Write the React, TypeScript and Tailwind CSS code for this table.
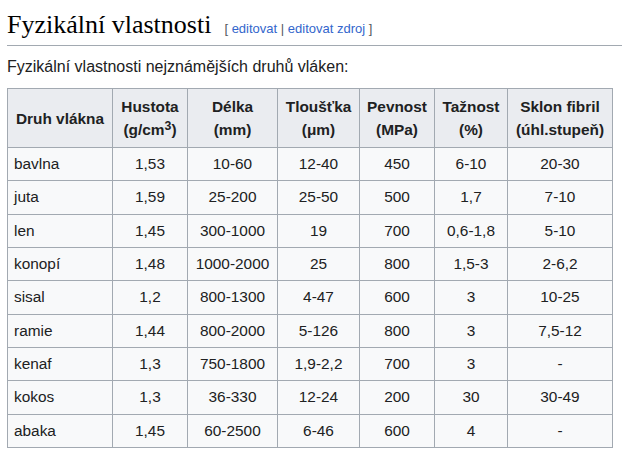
import React from "react";

const rows: string[][] = [
  ["bavlna", "1,53", "10-60", "12-40", "450", "6-10", "20-30"],
  ["juta", "1,59", "25-200", "25-50", "500", "1,7", "7-10"],
  ["len", "1,45", "300-1000", "19", "700", "0,6-1,8", "5-10"],
  ["konopí", "1,48", "1000-2000", "25", "800", "1,5-3", "2-6,2"],
  ["sisal", "1,2", "800-1300", "4-47", "600", "3", "10-25"],
  ["ramie", "1,44", "800-2000", "5-126", "800", "3", "7,5-12"],
  ["kenaf", "1,3", "750-1800", "1,9-2,2", "700", "3", "-"],
  ["kokos", "1,3", "36-330", "12-24", "200", "30", "30-49"],
  ["abaka", "1,45", "60-2500", "6-46", "600", "4", "-"],
];

const th =
  "border border-[#a2a9b1] bg-[#eaecf0] px-[6px] h-[59px] leading-[23px] font-bold text-center align-middle";
const tdFirst =
  "border border-[#a2a9b1] px-[6px] h-[33.33px] leading-[22px] text-left align-middle";
const td =
  "border border-[#a2a9b1] px-[6px] h-[33.33px] leading-[22px] text-center align-middle";

export default function App() {
  return (
    <div
      className="bg-white text-[#202122] px-[7px] pt-[8px] w-[622px] h-[456px] overflow-hidden"
      style={{ fontFamily: '"Liberation Sans", Arial, sans-serif' }}
    >
      <div className="border-b border-[#a2a9b1] pb-[3px] -mr-[7px]">
        <span
          className="text-[26px] leading-[34px] text-black"
          style={{ fontFamily: '"Liberation Serif", "Times New Roman", serif' }}
        >
          Fyzikální vlastnosti
        </span>
        <span className="ml-[13px] text-[13px] text-[#54595d]">
          [ <span className="text-[#3366cc]">editovat</span> |{" "}
          <span className="text-[#3366cc]">editovat zdroj</span> ]
        </span>
      </div>
      <p className="mt-[9px] text-[16px] leading-[24px]">
        Fyzikální vlastnosti nejznámějších druhů vláken:
      </p>
      <table className="mt-[9px] table-fixed border-collapse border border-[#a2a9b1] bg-[#f8f9fa] text-[15.4px] w-[605px]">
        <colgroup>
          <col className="w-[105px]" />
          <col className="w-[75px]" />
          <col className="w-[90px]" />
          <col className="w-[82px]" />
          <col className="w-[75px]" />
          <col className="w-[73px]" />
          <col className="w-[105px]" />
        </colgroup>
        <thead>
          <tr>
            <th className={th}>Druh vlákna</th>
            <th className={th}>
              Hustota
              <br />
              (g/cm<sup className="text-[0.8em] relative -top-[0.4em] align-baseline leading-none">3</sup>)
            </th>
            <th className={th}>
              Délka
              <br />
              (mm)
            </th>
            <th className={th}>
              Tloušťka
              <br />
              (μm)
            </th>
            <th className={th}>
              Pevnost
              <br />
              (MPa)
            </th>
            <th className={th}>
              Tažnost
              <br />
              (%)
            </th>
            <th className={th}>
              Sklon fibril
              <br />
              (úhl.stupeň)
            </th>
          </tr>
        </thead>
        <tbody>
          {rows.map((r) => (
            <tr key={r[0]}>
              {r.map((c, i) => (
                <td key={i} className={i === 0 ? tdFirst : td}>
                  {c}
                </td>
              ))}
            </tr>
          ))}
        </tbody>
      </table>
    </div>
  );
}
